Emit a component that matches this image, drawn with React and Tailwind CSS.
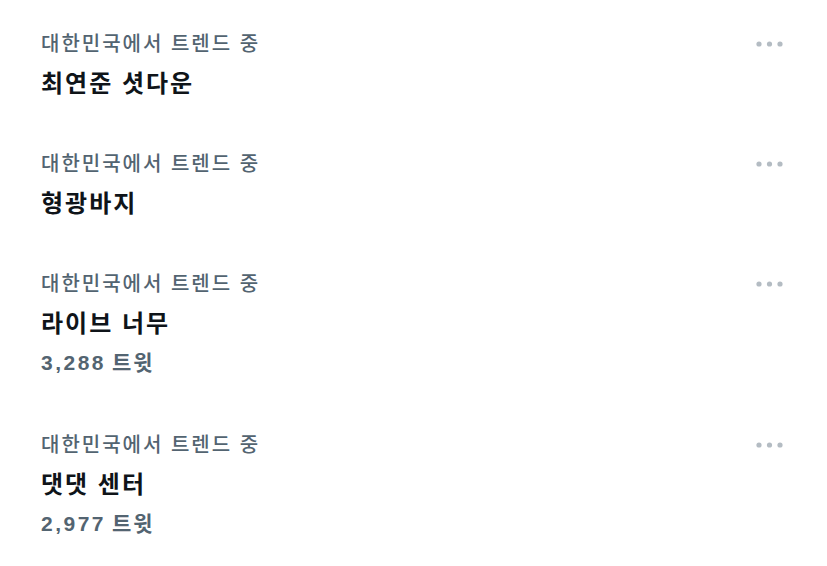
const trends = [
  { name: '최연준 셧다운' },
  { name: '형광바지' },
  { name: '라이브 너무', count: '3,288' },
  { name: '댓댓 센터', count: '2,977' },
]

function MoreIcon() {
  return (
    <svg width="27" height="6" viewBox="0 0 27 6" className="mt-[9px]">
      <circle cx="3" cy="3" r="2.6" fill="#b4bcc3" />
      <circle cx="13.5" cy="3" r="2.6" fill="#b4bcc3" />
      <circle cx="24" cy="3" r="2.6" fill="#b4bcc3" />
    </svg>
  )
}

function TrendItem({ name, count }) {
  return (
    <div className="flex justify-between pl-[41px] pr-[44px] pb-[56px]">
      <div>
        <div className="text-[20px] leading-[24px] tracking-[2px] font-medium text-[#536471]">
          대한민국에서 트렌드 중
        </div>
        <div className="mt-[16px] text-[24px] leading-[24px] tracking-[2px] font-bold text-[#0f1419]">
          {name}
        </div>
        {count && (
          <div className="mt-[15px] mb-[2px] text-[21px] leading-[24px] font-bold text-[#536471]">
            <span className="tracking-[2.5px]">{count}</span>{' '}
            <span className="tracking-[2px]">트윗</span>
          </div>
        )}
      </div>
      <MoreIcon />
    </div>
  )
}

export default function App() {
  return (
    <div
      className="w-[827px] h-[566px] bg-white pt-[32px] overflow-hidden"
      style={{ fontFamily: '"Liberation Sans", "Noto Sans CJK KR", sans-serif' }}
    >
      {trends.map((t) => (
        <TrendItem key={t.name} {...t} />
      ))}
    </div>
  )
}
